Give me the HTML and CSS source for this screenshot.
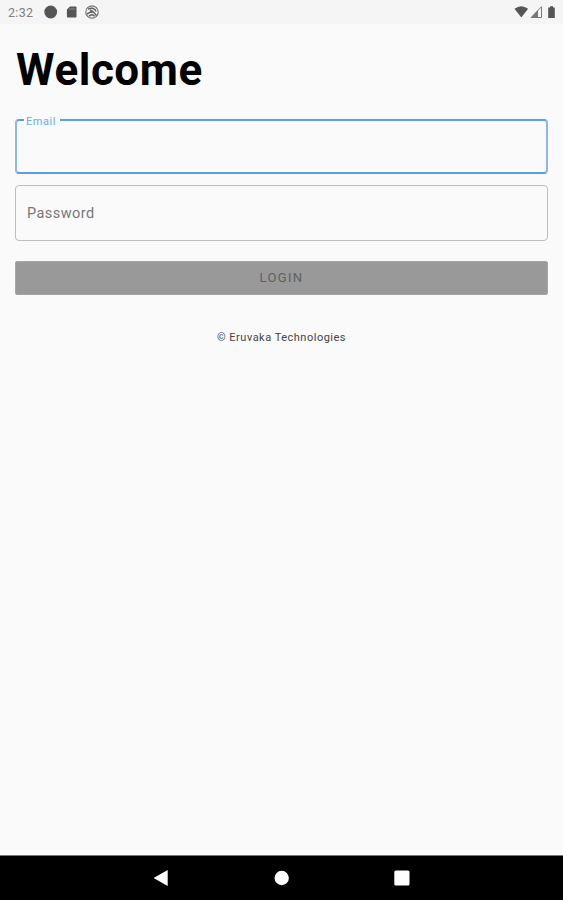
FILE: index.html
```html
<!DOCTYPE html>
<html lang="en">
<head>
<meta charset="utf-8">
<title>Welcome</title>
<link rel="stylesheet" href="styles.css">
</head>
<body>
<header class="status">
  <span class="time">2:32</span>
  <svg class="notices" width="58" height="16" viewBox="0 0 58 16">
    <circle cx="6.700" cy="8" r="6.400" fill="#555"/>
    <path d="M26 2.400h5.500q1 0 1 1v9.200q0 1-1 1h-7.600q-1 0-1-1V5.500z" fill="#555"/>
    <path d="M26 4v2M28 4v2M30 4v2" stroke="#999" stroke-width=".8"/>
    <circle cx="48" cy="8" r="6.200" fill="none" stroke="#777" stroke-width="1.200"/>
    <path d="M44 5l4-1 3 1.500 1 2M46 6l3 1.500 3.500 4M43 10l3.500-2 2 .5M45 12l3-1.500 2.500 1.500" fill="none" stroke="#666" stroke-width="1.500"/>
  </svg>
  <svg class="system" width="44" height="16" viewBox="0 0 44 16">
    <path d="M1.500 4.800Q8.300-.300 15.100 4.800L8.300 13.600z" fill="#555"/>
    <path d="M18.300 13.500L28.500 2.700V13.500z" fill="none" stroke="#777"/>
    <path d="M17.500 14L25 6v8z" fill="#777"/>
    <path d="M35.200 3.400h1.800V2.200h3v1.200h1.800V14h-6.600z" fill="#555"/>
  </svg>
</header>
<main class="content">
  <h1>Welcome</h1>
  <fieldset class="field active"><legend>Email</legend></fieldset>
  <div class="field password"><span>Password</span></div>
  <button class="login" disabled>LOGIN</button>
  <p class="copyright">© Eruvaka Technologies</p>
</main>
<nav class="navbar">
  <svg width="16" height="18" viewBox="0 0 16 18"><path d="M-.3 9L13.700 1v16z" fill="#fff"/></svg>
  <svg width="16" height="18" viewBox="0 0 16 18"><circle cx="7.700" cy="9" r="7.200" fill="#fff"/></svg>
  <svg width="16" height="18" viewBox="0 0 16 18"><rect x=".3" y="1.500" width="15.200" height="15" rx="1.500" fill="#fff"/></svg>
</nav>
</body>
</html>
```
FILE: styles.css
```css
* { box-sizing: border-box; }
body {
  margin: 0;
  height: 900px;
  display: flex;
  flex-direction: column;
  background: #fafafa;
  font-family: Roboto, sans-serif;
}
.status {
  height: 24px;
  display: flex;
  align-items: center;
  padding: 0 6px 0 8px;
  background: #f5f5f5;
}
.time { width: 36px; padding-top: 1px; font-size: 12.5px; line-height: 23px; letter-spacing: .3px; color: #808080; }
.system { margin-left: auto; }
.content {
  flex: 1;
  display: flex;
  flex-direction: column;
  padding: 20px 15px 0;
}
h1 {
  margin: 0 0 0 1px;
  padding-top: 1px;
  font-size: 44px;
  line-height: 51px;
  font-weight: 700;
  letter-spacing: .55px;
  color: #000;
}
.field {
  margin: 0;
  padding: 0;
  min-width: 0;
  height: 56px;
  border: 1px solid #bdbdbd;
  border-radius: 4px;
}
.field.active {
  height: 62px;
  margin-top: 16px;
  padding: 0 7px;
  border: 2px solid #5a9fe0;
  border-left-color: #8fb8ea;
  border-right-color: #8fb8ea;
}
.active legend {
  padding: 4px 4px 0 2px;
  font-size: 11px;
  line-height: 12px;
  letter-spacing: .55px;
  color: #66aee8;
}
.password {
  display: flex;
  align-items: center;
  margin-top: 11px;
  padding-left: 11px;
  font-size: 14.5px;
  letter-spacing: .45px;
  color: #777;
}
.login {
  height: 34px;
  margin: 20px 0 0;
  padding: 0;
  border: 1px solid #a6a6a6;
  border-radius: 2px;
  background: #999;
  font: 400 13px/32px Roboto, sans-serif;
  letter-spacing: 1.35px;
  color: #606060;
}
.copyright {
  margin: 35px 0 0;
  text-align: center;
  font-size: 11px;
  line-height: 16px;
  letter-spacing: .5px;
  color: #444;
}
.navbar {
  height: 45px;
  display: flex;
  justify-content: center;
  align-items: center;
  gap: 104px;
  border-top: 1px solid #777;
  background: #000;
}
```
